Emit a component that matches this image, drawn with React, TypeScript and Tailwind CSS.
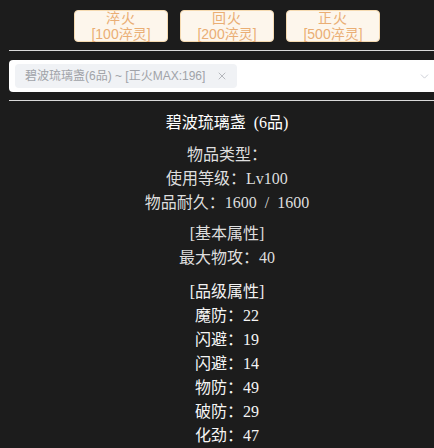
import { ChevronDown, X } from 'lucide-react'

const refineButtons = [
  { name: '淬火', cost: '[100淬灵]' },
  { name: '回火', cost: '[200淬灵]' },
  { name: '正火', cost: '[500淬灵]' },
]

const baseInfo = ['物品类型：', '使用等级：Lv100', '物品耐久：1600 / 1600']

const qualityAttrs = [
  { label: '魔防', value: 22 },
  { label: '闪避', value: 19 },
  { label: '闪避', value: 14 },
  { label: '物防', value: 49 },
  { label: '破防', value: 29 },
  { label: '化劲', value: 47 },
]

export default function App() {
  return (
    <div className="w-full h-[448px] overflow-hidden bg-[#1c1c1c]">
      <div className="ml-[9px] w-[436px]">
        {/* Refine buttons */}
        <div className="pt-[10px] flex justify-center gap-[12px]">
          {refineButtons.map((b) => (
            <button
              key={b.name}
              className="w-[94px] h-[32px] flex flex-col items-center justify-center rounded-[4px] border border-[#f5dab1] bg-[#fdf6ec] text-[#eaae74] text-[14px] leading-[16px] font-['Liberation_Sans','Noto_Sans_CJK_SC',sans-serif]"
            >
              <span className="tracking-[1px]">{b.name}</span>
              <span>{b.cost}</span>
            </button>
          ))}
        </div>

        {/* Item select */}
        <div className="mt-[8px] border-y border-[#d9d9d9] pt-[9px] pb-[8px]">
          <div className="h-[32px] bg-white rounded-[4px] flex items-center pl-[6px] pr-[14px] font-['Liberation_Sans','Noto_Sans_CJK_SC',sans-serif]">
            <span className="h-[24px] flex items-center gap-[11px] rounded-[4px] bg-[#f0f2f5] pl-[10px] pr-[9px] text-[12px] text-[#a0a3a8]">
              碧波琉璃盏(6品) ~ [正火MAX:196]
              <X className="w-[12px] h-[12px]" strokeWidth={1.5} />
            </span>
            <ChevronDown className="ml-auto w-[13px] h-[13px] text-[#c0c4cc]" strokeWidth={1.5} />
          </div>
        </div>

        {/* Item details */}
        <div className="flex flex-col items-center text-[16px] leading-[24px] [word-spacing:4px] text-[#dedede] font-['Liberation_Serif','Noto_Sans_CJK_SC',serif]">
          <div className="mt-[10px] text-white">碧波琉璃盏 (6品)</div>
          <div className="mt-[8px] flex flex-col items-center">
            {baseInfo.map((line) => (
              <div key={line}>{line}</div>
            ))}
          </div>
          <div className="mt-[7px]">[基本属性]</div>
          <div>最大物攻：40</div>
          <div className="mt-[10px] text-[#f2f2f2]">[品级属性]</div>
          {qualityAttrs.map((a, i) => (
            <div key={i} className="text-[#f5f5f5]">
              {a.label}：{a.value}
            </div>
          ))}
        </div>
      </div>
    </div>
  )
}
